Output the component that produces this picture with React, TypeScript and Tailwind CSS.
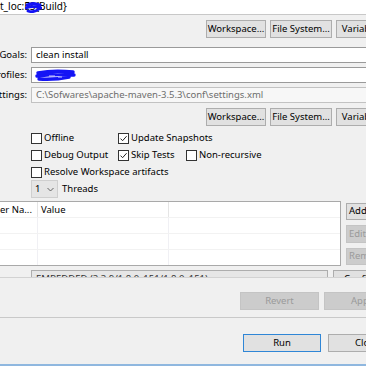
import React from "react";

function Btn({ label, w, disabled, primary, left }: { label: string; w: string; disabled?: boolean; primary?: boolean; left?: boolean }) {
  return (
    <div
      className={`${w} h-full shrink-0 flex items-center border whitespace-nowrap overflow-hidden ${
        left ? "justify-start pl-[2px]" : "justify-center"
      } ${
        disabled
          ? "bg-[#cccccc] border-[#c4c4c4] text-[#9a9a9a]"
          : primary
          ? "bg-[#e1e1e1] border-[#2f86d6] text-black"
          : "bg-[#e1e1e1] border-[#adadad] text-black"
      }`}
    >
      {label}
    </div>
  );
}

function Check({ label, checked }: { label: string; checked?: boolean }) {
  return (
    <div className="flex items-center gap-[2px] whitespace-nowrap">
      <div className="w-[11px] h-[11px] border border-[#333333] bg-white flex items-center justify-center">
        {checked && (
          <svg width="9" height="9" viewBox="0 0 9 9">
            <path d="M1.5 4.6 L3.6 6.7 L7.6 2.2" fill="none" stroke="#222" strokeWidth="1" />
          </svg>
        )}
      </div>
      <span>{label}</span>
    </div>
  );
}

function Field({ label, children, readOnly }: { label: string; children: React.ReactNode; readOnly?: boolean }) {
  return (
    <div className="flex h-[16px] items-center">
      <div className="w-[31px] shrink-0 flex justify-end pr-[4px] whitespace-nowrap">
        <span>{label}</span>
      </div>
      <div
        className={`relative w-[400px] shrink-0 h-full border flex items-center pl-[4px] whitespace-nowrap ${
          readOnly ? "bg-[#f7f7f7] border-[#c2c2c2] text-[#6d6d6d]" : "bg-white border-[#9a9a9a]"
        }`}
      >
        {children}
      </div>
    </div>
  );
}

function ButtonRow() {
  return (
    <div className="flex h-[18px] pl-[206px] gap-[4px]">
      <Btn label="Workspace..." w="w-[60px]" />
      <Btn label="File System..." w="w-[62px]" />
      <Btn label="Variables..." w="w-[60px]" />
    </div>
  );
}

export default function App() {
  return (
    <div className="w-[366px] h-[366px] overflow-hidden bg-[#f0f0f0] flex flex-col text-[9.5px] text-black font-['Noto_Sans',sans-serif]">
      {/* base directory tail */}
      <div className="relative h-[15px] shrink-0 bg-white border-b border-[#c8c8c8] leading-[13px] whitespace-nowrap">
        <span className="text-[10px]">t_loc:ES{"{"}Build{"}"}</span>
        <svg className="absolute left-[25px] top-[2px]" width="17" height="11" viewBox="0 0 17 11">
          <path d="M2 3 Q8 0 15 3 M1 6 Q8 3 16 6 M3 9 Q9 11 14 7" fill="none" stroke="#1414f5" strokeWidth="2.8" strokeLinecap="round" />
        </svg>
      </div>

      <div className="mt-[5px]">
        <ButtonRow />
      </div>

      <div className="mt-[9px] flex flex-col gap-[4px]">
        <Field label="Goals:">clean install</Field>
        <Field label="Profiles:">
          <svg className="absolute left-[3px] top-[1px]" width="42" height="13" viewBox="0 0 42 13">
            <path d="M3 4 Q18 1 38 3 M2 7 Q20 5 39 6 M4 10 Q20 11 34 8" fill="none" stroke="#1414f5" strokeWidth="3.4" strokeLinecap="round" />
            <path d="M14 7 L20 7 M23 8 L27 8" stroke="#c9c9ff" strokeWidth="1" />
          </svg>
        </Field>
        <Field label="Settings:" readOnly>
          C:\Sofwares\apache-maven-3.5.3\conf\settings.xml
        </Field>
      </div>

      <div className="mt-[5px]">
        <ButtonRow />
      </div>

      {/* options */}
      <div className="mt-[4px] flex flex-col">
        <div className="h-[17px] flex items-center">
          <div className="ml-[31px] w-[87px]"><Check label="Offline" /></div>
          <Check label="Update Snapshots" checked />
        </div>
        <div className="h-[17px] flex items-center">
          <div className="ml-[31px] w-[87px]"><Check label="Debug Output" /></div>
          <div className="w-[68px]"><Check label="Skip Tests" checked /></div>
          <Check label="Non-recursive" />
        </div>
        <div className="h-[16px] flex items-center">
          <div className="ml-[31px]"><Check label="Resolve Workspace artifacts" /></div>
        </div>
        <div className="h-[18px] flex items-center">
          <div className="ml-[31px] w-[27px] h-full bg-[#e5e5e5] border border-[#cfcfcf] flex items-center pl-[3px] gap-[7px]">
            <span>1</span>
            <svg width="7" height="5" viewBox="0 0 7 5">
              <path d="M0.5 1 L3.5 4 L6.5 1" fill="none" stroke="#555" strokeWidth="0.9" />
            </svg>
          </div>
          <span className="ml-[4px]">Threads</span>
        </div>
      </div>

      {/* parameters table */}
      <div className="mt-[3px] h-[65px] shrink-0 flex">
        <div className="w-[341px] shrink-0 h-full bg-white border-t border-r border-b border-[#a9a9a9] flex flex-col">
          <div className="h-[17px] flex border-b border-[#f2f2f2]">
            <div className="w-[38px] border-r border-[#e5e5e5] flex items-center whitespace-nowrap overflow-hidden">er Na...</div>
            <div className="w-[131px] border-r border-[#e5e5e5] flex items-center pl-[3px]">Value</div>
            <div className="flex-1" />
          </div>
          {[0, 1, 2].map((r) => (
            <div key={r} className={`h-[16px] flex ${r < 2 ? "border-b border-[#f2f2f2]" : ""}`}>
              <div className="w-[38px] border-r border-[#f0f0f4]" />
              <div className="w-[131px] border-r border-[#f0f0f4]" />
              <div className="flex-1" />
            </div>
          ))}
        </div>
        <div className="ml-[5px] shrink-0 flex flex-col pt-[2px] gap-[5px]">
          <div className="h-[17px]"><Btn label="Add..." w="w-[40px]" left /></div>
          <div className="h-[18px]"><Btn label="Edit..." w="w-[40px]" disabled left /></div>
          <div className="h-[17px]"><Btn label="Remove" w="w-[40px]" disabled left /></div>
        </div>
      </div>

      {/* clipped runtime row */}
      <div className="mt-[4px] h-[7px] shrink-0 overflow-hidden flex">
        <div className="ml-[31px] w-[297px] h-[18px] shrink-0 bg-[#e6e6e6] border border-[#adadad] pl-[4px] pt-[1px] leading-[14px] whitespace-nowrap text-[#333]">
          EMBEDDED (3.3.9/1.8.0_151/1.8.0_151)
        </div>
        <div className="ml-[5px] w-[60px] h-[18px] shrink-0 bg-[#e1e1e1] border border-[#adadad] pl-[10px] pt-[1px] leading-[14px]">
          Configure...
        </div>
      </div>

      <div className="border-t border-[#d2d2d2] flex flex-col">
        <div className="mt-[14px] h-[18px] flex pl-[240px] gap-[5px]">
          <Btn label="Revert" w="w-[79px]" disabled />
          <Btn label="Apply" w="w-[79px]" disabled />
        </div>
        <div className="mt-[7px] border-t border-[#c9c9c9]" />
        <div className="mt-[16px] h-[18px] flex pl-[243px] gap-[7px]">
          <Btn label="Run" w="w-[78px]" primary />
          <Btn label="Close" w="w-[78px]" />
        </div>
        <div className="mt-[12px] h-[2px] bg-[#8fb7df]" />
      </div>
    </div>
  );
}
